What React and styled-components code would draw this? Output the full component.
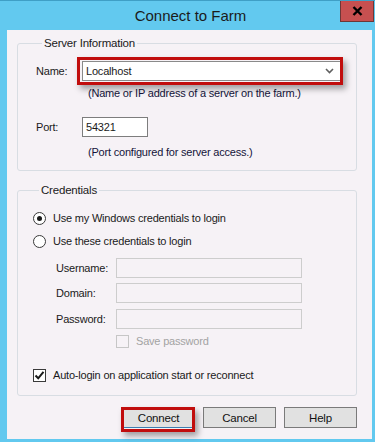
import React from "react";
import styled, { createGlobalStyle } from "styled-components";

const GlobalStyle = createGlobalStyle`
  html, body {
    margin: 0;
    padding: 0;
  }
  body {
    font-family: "Liberation Sans", Arial, sans-serif;
    font-size: 11px;
    letter-spacing: -0.2px;
    color: #1a1a1a;
  }
`;

const Window = styled.div`
  position: relative;
  width: 375px;
  height: 442px;
  box-sizing: border-box;
  background: #62c9ef;
  border-top: 1px solid #3f9fc6;
  padding: 0 3px 3px 7px;
  display: flex;
  flex-direction: column;
`;

const TitleBar = styled.div`
  height: 29px;
  display: flex;
  align-items: center;
  justify-content: center;
  font-size: 15px;
  letter-spacing: 0;
  color: #1b1b1b;
  padding-left: 2px;
`;

const CloseButton = styled.div`
  position: absolute;
  top: 0;
  right: 1px;
  width: 34px;
  height: 21px;
  box-sizing: border-box;
  background: #c75050;
  border: 1px solid #6d3737;
  border-top: none;
  display: flex;
  align-items: center;
  justify-content: center;
`;

const Client = styled.div`
  flex: 1;
  background: #f6f2f6;
  padding: 6px 15px 11px 10px;
  display: flex;
  flex-direction: column;
`;

const Group = styled.fieldset`
  margin: ${(p) => p.$top || 0}px 0 0 0;
  padding: ${(p) => p.$pad};
  border: 1px solid #d8dde3;
  border-radius: 3px;
  min-width: 0;
  display: flex;
  flex-direction: column;
  align-items: flex-start;
`;

const Legend = styled.legend`
  padding: 0 2px;
  margin-left: 6px;
  line-height: 15px;
  font-size: 11.5px;
  color: #1a1a1a;
`;

const FieldRow = styled.div`
  display: flex;
  align-items: center;
  margin-top: ${(p) => p.$top || 0}px;
  margin-left: ${(p) => p.$indent || 0}px;
`;

const Label = styled.span`
  width: ${(p) => p.$w}px;
  flex: none;
`;

const Anchor = styled.div`
  position: relative;
`;

const Combo = styled.div`
  width: 259px;
  height: 20px;
  box-sizing: border-box;
  background: #fff;
  border: 1px solid #8a8a8a;
  display: flex;
  align-items: center;
  justify-content: space-between;
  padding: 0 6px 0 3px;
`;

const TextBox = styled.div`
  width: ${(p) => p.$w}px;
  height: 20px;
  box-sizing: border-box;
  background: ${(p) => (p.$disabled ? "#f6f2f6" : "#fff")};
  border: 1px solid ${(p) => (p.$disabled ? "#cdcdcd" : "#7d7d7d")};
  display: flex;
  align-items: center;
  padding: 0 3px;
`;

const Highlight = styled.span`
  position: absolute;
  top: ${(p) => p.$t}px;
  left: ${(p) => p.$l}px;
  right: ${(p) => p.$r}px;
  bottom: ${(p) => p.$b}px;
  border: 3px solid #c10d0d;
  box-shadow: 3px 4px 6px rgba(0, 0, 0, 0.35);
  pointer-events: none;
`;

const Hint = styled.div`
  line-height: 15px;
  margin-top: ${(p) => p.$top}px;
  margin-left: ${(p) => p.$indent}px;
  color: #14143a;
`;

const Option = styled.label`
  display: flex;
  align-items: center;
  gap: 7px;
  height: 16px;
  margin-top: ${(p) => p.$top || 0}px;
  margin-left: ${(p) => p.$indent || 0}px;
  color: ${(p) => (p.$disabled ? "#a3a3a3" : "#1a1a1a")};
`;

const Radio = styled.span`
  width: 13px;
  height: 13px;
  box-sizing: border-box;
  border-radius: 50%;
  border: 1px solid #3a3a3a;
  background: #fff;
  display: flex;
  align-items: center;
  justify-content: center;

  &::after {
    content: "";
    width: 5px;
    height: 5px;
    border-radius: 50%;
    background: ${(p) => (p.$on ? "#1a1a1a" : "transparent")};
  }
`;

const Check = styled.span`
  width: 13px;
  height: 13px;
  box-sizing: border-box;
  border: 1px solid ${(p) => (p.$disabled ? "#c6c6c6" : "#3a3a3a")};
  background: ${(p) => (p.$disabled ? "#f6f2f6" : "#fff")};
  display: flex;
  align-items: center;
  justify-content: center;
`;

const ButtonBar = styled.div`
  margin-top: auto;
  display: flex;
  justify-content: flex-end;
  gap: 8px;
`;

const Button = styled.div`
  width: 73px;
  height: 21px;
  box-sizing: border-box;
  background: #e1e1e1;
  border: 1px solid ${(p) => (p.$default ? "#3c7fb1" : "#7a7a7a")};
  display: flex;
  align-items: center;
  justify-content: center;
  font-size: 11.5px;
  color: #111;
`;

const CheckMark = () => (
  <svg width="11" height="11" viewBox="0 0 11 11">
    <path d="M1.5 5.5 L4.2 8.3 L9.5 1.8" fill="none" stroke="#1a1a1a" strokeWidth="2" />
  </svg>
);

export default function App() {
  return (
    <>
      <GlobalStyle />
      <Window>
        <TitleBar>Connect to Farm</TitleBar>
        <CloseButton>
          <svg width="11" height="10" viewBox="0 0 11 10">
            <path d="M1.5 1 L9.5 9 M9.5 1 L1.5 9" stroke="#000" strokeWidth="2.4" />
          </svg>
        </CloseButton>
        <Client>
          <Group $pad="10px 15px 10px 18px">
            <Legend>Server Information</Legend>
            <FieldRow>
              <Label $w={46}>Name:</Label>
              <Anchor>
                <Combo>
                  <span>Localhost</span>
                  <svg width="9" height="6" viewBox="0 0 9 6">
                    <path d="M1 1 L4.5 4.5 L8 1" fill="none" stroke="#606060" strokeWidth="1.6" />
                  </svg>
                </Combo>
                <Highlight $t={-4} $l={-5} $r={-2} $b={-4} />
              </Anchor>
            </FieldRow>
            <Hint $top={5} $indent={52}>(Name or IP address of a server on the farm.)</Hint>
            <FieldRow $top={16}>
              <Label $w={46}>Port:</Label>
              <TextBox $w={66}>54321</TextBox>
            </FieldRow>
            <Hint $top={8} $indent={52}>(Port configured for server access.)</Hint>
          </Group>

          <Group $top={12} $pad="12px 15px 12px 15px">
            <Legend>Credentials</Legend>
            <Option>
              <Radio $on />
              Use my Windows credentials to login
            </Option>
            <Option $top={7}>
              <Radio />
              Use these credentials to login
            </Option>
            <FieldRow $top={9} $indent={23}>
              <Label $w={60}>Username:</Label>
              <TextBox $w={186} $disabled />
            </FieldRow>
            <FieldRow $top={5} $indent={23}>
              <Label $w={60}>Domain:</Label>
              <TextBox $w={186} $disabled />
            </FieldRow>
            <FieldRow $top={6} $indent={23}>
              <Label $w={60}>Password:</Label>
              <TextBox $w={186} $disabled />
            </FieldRow>
            <Option $top={4} $indent={83} $disabled>
              <Check $disabled />
              Save password
            </Option>
            <Option $top={18}>
              <Check>
                <CheckMark />
              </Check>
              Auto-login on application start or reconnect
            </Option>
          </Group>

          <ButtonBar>
            <Anchor>
              <Button $default>Connect</Button>
              <Highlight $t={0} $l={-1} $r={0} $b={-4} />
            </Anchor>
            <Button>Cancel</Button>
            <Button>Help</Button>
          </ButtonBar>
        </Client>
      </Window>
    </>
  );
}
